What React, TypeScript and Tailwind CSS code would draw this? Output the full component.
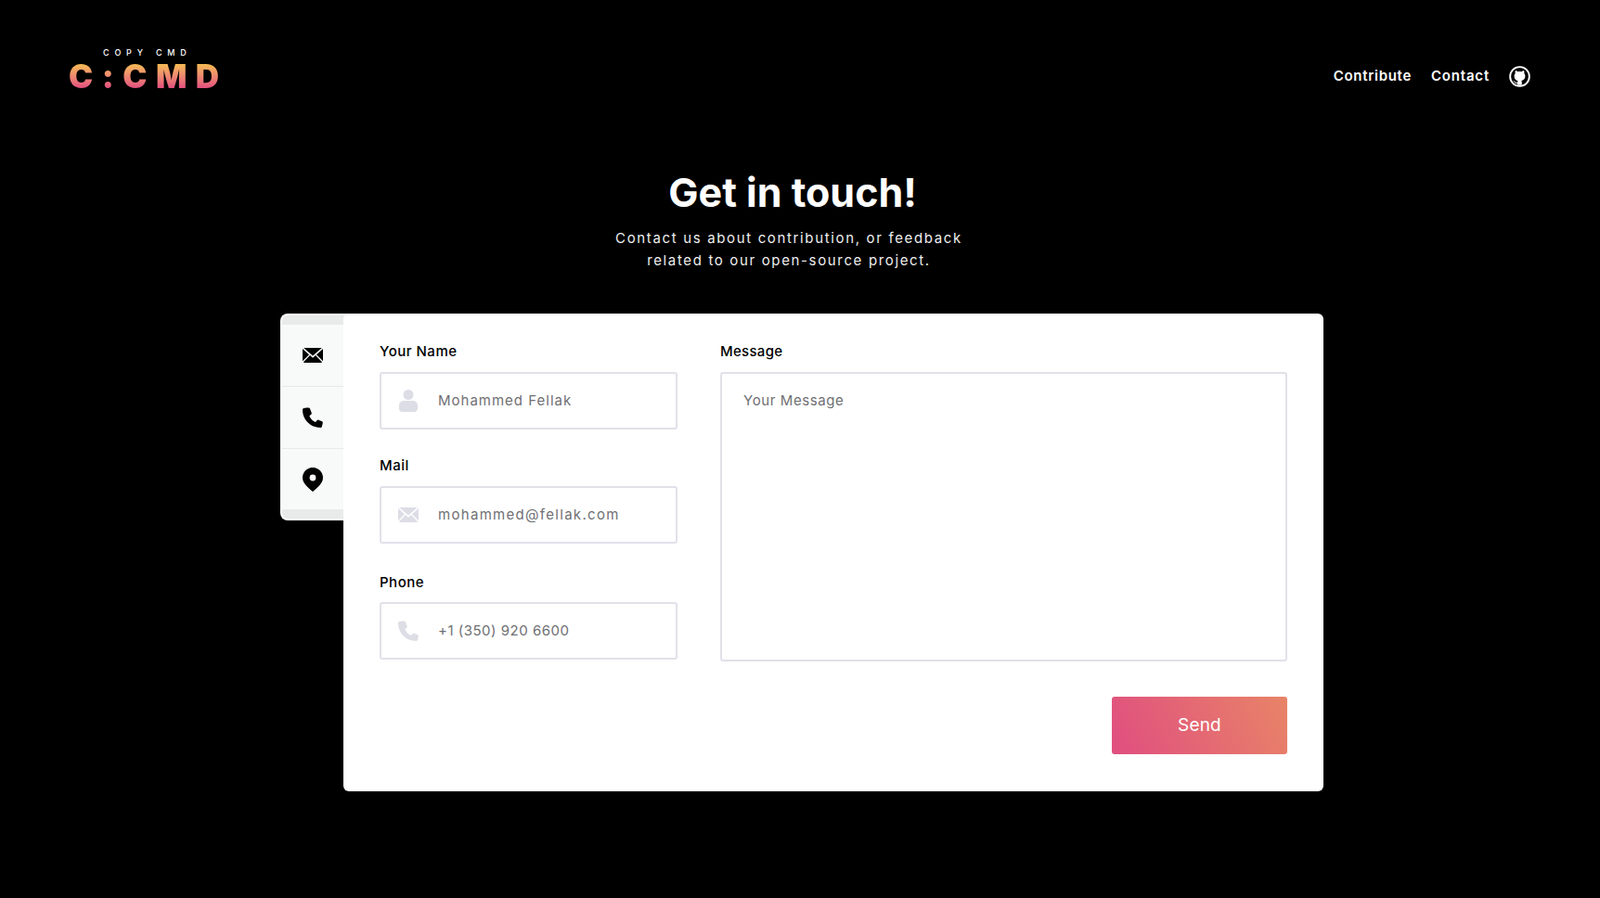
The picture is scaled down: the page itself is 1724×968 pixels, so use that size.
const FONT = "font-['Inter','Open_Sans',sans-serif]";

function MailIcon({ className }: { className?: string }) {
  return (
    <svg className={className} viewBox="0 0 22 16" aria-hidden="true">
      <path fill="currentColor" d="M1.2 0h19.6L11 8.6 1.2 0ZM0 1l7 6.2L0 14.2V1Zm22 0v13.2l-7-7L22 1ZM8 8.1l3 2.7 3-2.7 7 7.2c-.2.4-.6.7-1 .7H2c-.4 0-.8-.3-1-.7l7-7.2Z" />
    </svg>
  );
}

function PhoneIcon({ className }: { className?: string }) {
  return (
    <svg className={className} viewBox="0 0 22 22" aria-hidden="true">
      <path fill="currentColor" d="M4.6.4 1.3 1.1C.5 1.3 0 2 0 2.8 0 13.4 8.6 22 19.2 22c.8 0 1.5-.5 1.7-1.3l.9-3.7c.2-.7-.2-1.400-.8-1.700l-3.700-1.600c-.6-.3-1.400-.1-1.800.5l-1.500 1.900c-2.900-1.400-5.300-3.800-6.700-6.700l1.900-1.600c.6-.4.7-1.200.5-1.800L8 1.400C7.700.7 7 .3 6.300.4H4.600Z" />
    </svg>
  );
}

function PinIcon({ className }: { className?: string }) {
  return (
    <svg className={className} viewBox="0 0 22 26" aria-hidden="true">
      <path fill="currentColor" fillRule="evenodd" d="M11 0C4.900 0 0 4.900 0 11c0 6.500 7.500 11.800 11 15 3.500-3.200 11-8.500 11-15C22 4.900 17.100 0 11 0Zm0 7.600a3.400 3.400 0 1 1 0 6.800 3.400 3.400 0 0 1 0-6.800Z" />
    </svg>
  );
}

function UserIcon({ className }: { className?: string }) {
  return (
    <svg className={className} viewBox="0 0 20 24" aria-hidden="true">
      <circle cx="10" cy="5.500" r="5.500" fill="currentColor" />
      <path fill="currentColor" d="M5 12h10c2.800 0 5 2.200 5 5v3.500c0 1.900-1.600 3.500-3.500 3.500h-13C1.600 24 0 22.400 0 20.500V17c0-2.800 2.200-5 5-5Z" />
    </svg>
  );
}

function GithubIcon({ className }: { className?: string }) {
  return (
    <svg className={className} viewBox="0 0 24 24" aria-hidden="true">
      <circle cx="12" cy="12" r="10.800" fill="none" stroke="currentColor" strokeWidth="2" />
      <path
        fill="currentColor"
        d="M7.200 5.300c1 .1 2 .6 2.800 1.300a8 8 0 0 1 4 0c.8-.7 1.800-1.200 2.800-1.300.4 1 .5 2.100.2 3 .8.900 1.200 2 1.200 3.200 0 3.200-2 4.700-4.400 5.100.4.500.6 1.100.6 1.800v2.900a10 10 0 0 1-5 0v-1.700c-1.900.4-3-.3-3.600-1.500-.3-.6-.7-1-1.300-1.300.9-.1 1.600.3 2.200 1.100.6.800 1.400 1 2.700.7.100-.6.300-1.100.7-1.500C7.700 16.200 5.800 14.700 5.800 11.500c0-1.200.4-2.300 1.200-3.200-.3-.9-.2-2 .2-3Z"
      />
    </svg>
  );
}

function Field({ label, placeholder, icon, className, tracking, labelGap }: { label: string; placeholder: string; icon: React.ReactNode; className: string; tracking: string; labelGap: string }) {
  return (
    <div className={className}>
      <label className={`block text-[15px] leading-[22px] font-[450] tracking-[0.5px] text-black ${labelGap}`}>{label}</label>
      <div className="flex items-center h-[62px] w-[321px] rounded-[3px] border-2 border-[#e1e1ea] bg-white">
        <span className="w-[61px] shrink-0 flex justify-center pr-[3px] text-[#dddde6]">{icon}</span>
        <input
          placeholder={placeholder}
          className={`flex-1 min-w-0 outline-none text-[15px] text-[#6f6f73] placeholder:text-[#6f6f73] ${tracking}`}
        />
      </div>
    </div>
  );
}

export default function App() {
  return (
    <div className={`min-h-[968px] bg-black text-white ${FONT}`}>
      <header className="flex items-start justify-between pl-[74px] pr-[75px] pt-[52px]">
        <div className="flex flex-col items-start">
          <span className="ml-[37px] text-[9px] leading-[9px] font-medium tracking-[5.800px] text-white">COPY CMD</span>
          <span className="mt-[8px] text-[35px] leading-[27px] font-black tracking-[9.500px] whitespace-nowrap bg-gradient-to-b from-[#f5bb52] to-[#e2487f] bg-clip-text text-transparent">
            C:CMD
          </span>
        </div>
        <nav className="flex items-center gap-[21px] pt-[18px]">
          <a className="text-[15px] leading-[24px] font-semibold tracking-[0.7px]">Contribute</a>
          <a className="text-[15px] leading-[24px] font-semibold tracking-[0.8px]">Contact</a>
          <GithubIcon className="w-[23px] h-[23px] text-white" />
        </nav>
      </header>

      <section className="flex flex-col items-center mt-[86px] pr-[24px]">
        <h1 className="ml-[8px] text-[43px] leading-[50px] font-bold">Get in touch!</h1>
        <p className="mt-[13px] text-center text-[15px] leading-[24px] tracking-[1.650px] text-[#eeeeee]">
          Contact us about contribution, or feedback
          <br />
          related to our open-source project.
        </p>
      </section>

      <div className="flex justify-center mt-[45px] pl-[4px]">
        <aside className="w-[74px] -mr-[6px] pr-[6px] h-[223px] rounded-l-[8px] border-l-2 border-y-2 border-white bg-[#f8f9f9] flex flex-col text-black overflow-hidden">
          <div className="h-[10px] bg-[#e9eaea] shrink-0 -mr-[6px]" />
          <div className="h-[67px] flex items-center justify-center border-b border-[#e8e9e9]">
            <MailIcon className="w-[22px] h-[16px]" />
          </div>
          <div className="h-[67px] flex items-center justify-center border-b border-[#e8e9e9]">
            <PhoneIcon className="w-[22px] h-[22px]" />
          </div>
          <div className="flex-1 flex items-center justify-center">
            <PinIcon className="w-[22px] h-[26px]" />
          </div>
          <div className="h-[10px] bg-[#e9eaea] shrink-0 -mr-[6px]" />
        </aside>

        <form className="relative w-[1056px] h-[515px] rounded-[6px] bg-white pl-[39px] pr-[39px] pt-[30px] flex gap-[46px]">
          <div className="w-[321px] shrink-0">
            <Field label="Your Name" placeholder="Mohammed Fellak" className="" labelGap="mb-[11px]" tracking="tracking-[1px]" icon={<UserIcon className="w-[20px] h-[24px]" />} />
            <Field label="Mail" placeholder="mohammed@fellak.com" className="mt-[28px]" labelGap="mb-[11px]" tracking="tracking-[1.300px]" icon={<MailIcon className="w-[22px] h-[16px]" />} />
            <Field label="Phone" placeholder="+1 (350) 920 6600" className="mt-[31px]" labelGap="mb-[10px]" tracking="tracking-[0.500px]" icon={<PhoneIcon className="w-[22px] h-[22px]" />} />
          </div>
          <div className="flex-1 flex flex-col">
            <label className="block text-[15px] leading-[22px] font-[450] tracking-[0.3px] text-black mb-[11px]">Message</label>
            <textarea
              placeholder="Your Message"
              className="h-[312px] w-full resize-none rounded-[3px] border-2 border-[#e1e1ea] px-[23px] py-[17px] outline-none text-[15px] leading-[24px] tracking-[0.6px] text-[#6f6f73] placeholder:text-[#6f6f73]"
            />
            <button
              type="button"
              className="self-end mt-[38px] w-[189px] h-[62px] rounded-[3px] bg-[linear-gradient(65deg,#e04e80,#e88467)] text-[19px] text-white font-normal tracking-[0.2px]"
            >
              Send
            </button>
          </div>
        </form>
      </div>
    </div>
  );
}
